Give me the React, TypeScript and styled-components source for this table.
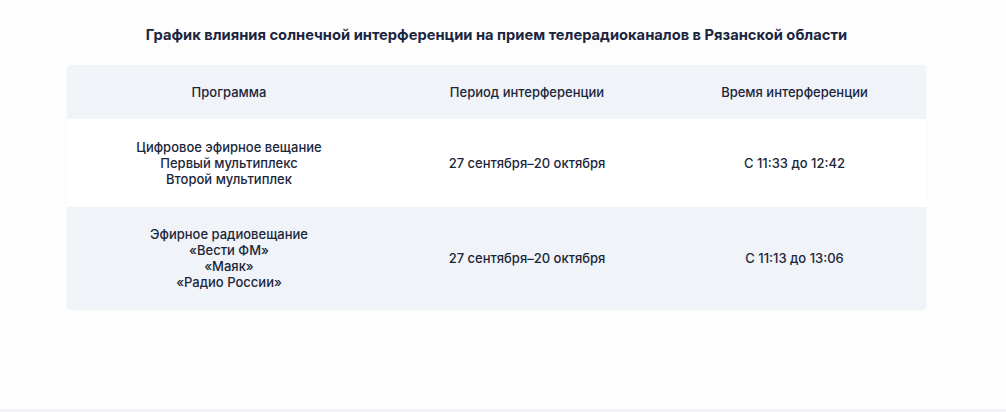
import React from 'react';
import styled, { createGlobalStyle } from 'styled-components';

const GlobalStyle = createGlobalStyle`
  html, body {
    margin: 0;
    padding: 0;
    background: #fdfdfd;
    font-family: Inter, "Noto Sans", sans-serif;
  }
`;

const Page = styled.div`
  width: 1006px;
  height: 412px;
  box-sizing: border-box;
  padding-right: 13px;
  display: flex;
  flex-direction: column;
  align-items: center;
  border-bottom: 3px solid #f1f3f8;
`;

const Title = styled.h2`
  margin: 25px 0 0;
  font-size: 14.7px;
  line-height: 20px;
  font-weight: 700;
  color: #1b2540;
  text-align: center;
`;

const Table = styled.div`
  margin-top: 20px;
  width: 859px;
  display: flex;
  flex-direction: column;
  border-radius: 4px;
  box-shadow: 0 1px 2px rgba(30, 45, 80, 0.06);
`;

const Row = styled.div<{ $shaded?: boolean; $head?: boolean }>`
  display: grid;
  grid-template-columns: 324px 272px 1fr;
  align-items: center;
  padding: ${(p) => (p.$head ? '19px 0' : '20px 0')};
  background: ${(p) => (p.$shaded ? '#f0f3f8' : '#ffffff')};
  &:first-child {
    border-radius: 4px 4px 0 0;
  }
  &:last-child {
    padding: 19px 0;
    border-radius: 0 0 4px 4px;
  }
`;

const Cell = styled.div`
  text-align: center;
  font-size: 13px;
  line-height: 16px;
  font-weight: 500;
  color: #1b263a;
`;

const rows = [
  {
    program: ['Цифровое эфирное вещание', 'Первый мультиплекс', 'Второй мультиплек'],
    period: '27 сентября–20 октября',
    time: 'С 11:33 до 12:42',
  },
  {
    program: ['Эфирное радиовещание', '«Вести ФМ»', '«Маяк»', '«Радио России»'],
    period: '27 сентября–20 октября',
    time: 'С 11:13 до 13:06',
  },
];

export default function App() {
  return (
    <>
      <GlobalStyle />
      <Page>
        <Title>График влияния солнечной интерференции на прием телерадиоканалов в Рязанской области</Title>
        <Table>
          <Row $head $shaded>
            <Cell>Программа</Cell>
            <Cell>Период интерференции</Cell>
            <Cell>Время интерференции</Cell>
          </Row>
          {rows.map((r, i) => (
            <Row key={i} $shaded={i % 2 === 1}>
              <Cell>
                {r.program.map((line) => (
                  <div key={line}>{line}</div>
                ))}
              </Cell>
              <Cell>{r.period}</Cell>
              <Cell>{r.time}</Cell>
            </Row>
          ))}
        </Table>
      </Page>
    </>
  );
}
